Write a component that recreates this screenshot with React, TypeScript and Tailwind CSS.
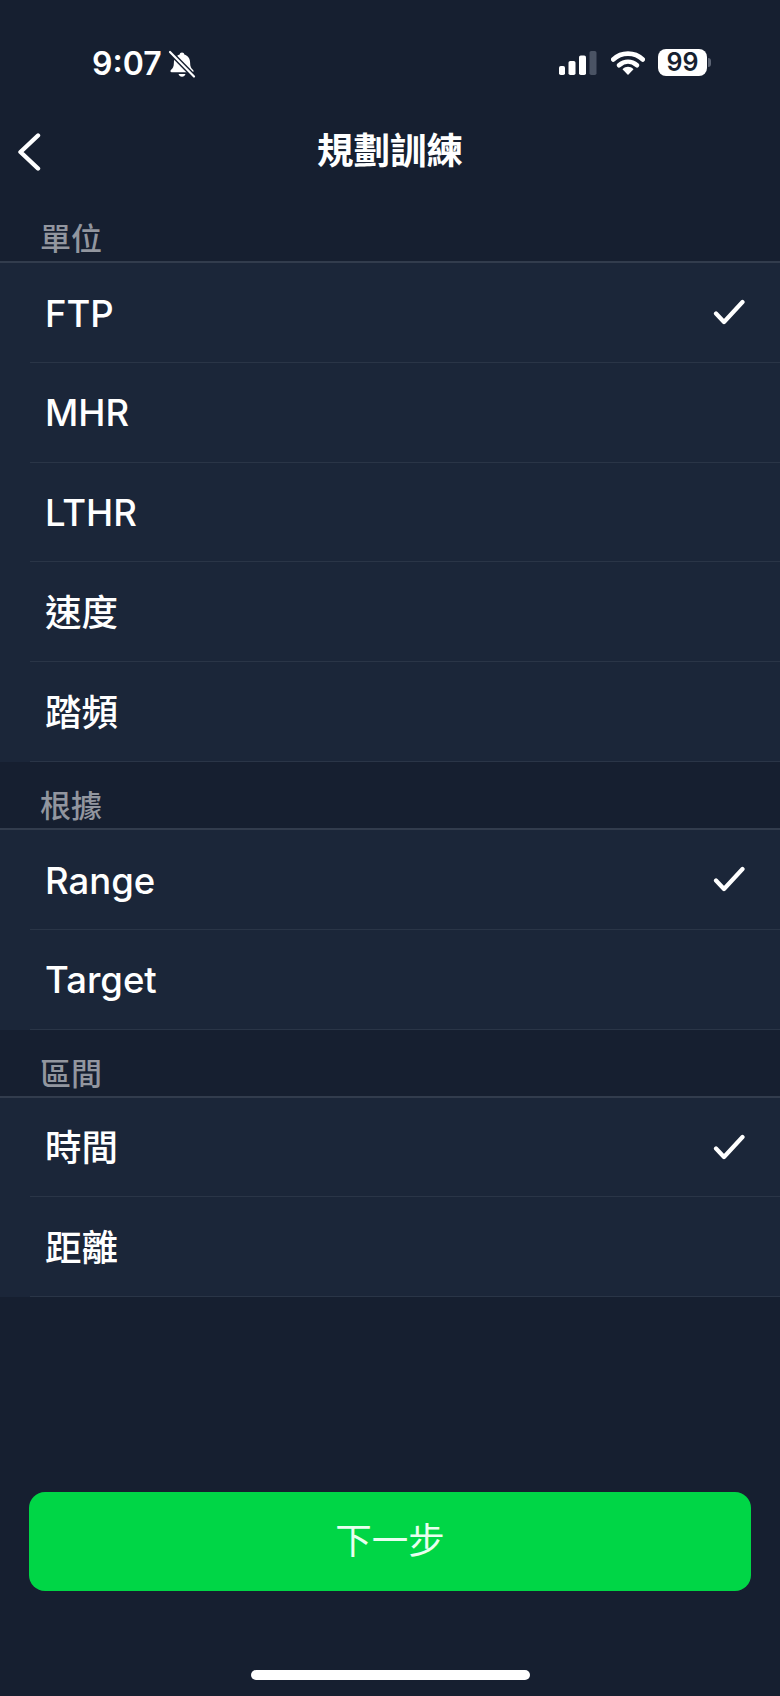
import React from "react";

const font = { fontFamily: 'Inter, "Noto Sans CJK TC", sans-serif' };

function Check() {
  return (
    <svg width="32" height="26" viewBox="0 0 32 26" fill="none" className="shrink-0">
      <path d="M3 14.5 L11 23 L29.5 3" stroke="#ffffff" strokeWidth="4.2" strokeLinecap="round" strokeLinejoin="round" />
    </svg>
  );
}

function Row({ label, checked }: { label: string; checked?: boolean }) {
  return (
    <div className="h-[99.8px] pl-[30px] bg-[#1b2639]">
      <div className="h-full flex items-center justify-between pr-[35px] pl-[15px] border-b border-[#2a3547]">
        <span className="text-[36.5px] leading-none font-medium text-white mt-[3px]">{label}</span>
        {checked && <Check />}
      </div>
    </div>
  );
}

function SectionHeader({ label }: { label: string }) {
  return (
    <div className="h-[68px] bg-[#161f30] flex items-end pl-[40px] pb-[2px] border-b-2 border-[#323c4d]">
      <span className="text-[31px] leading-[40px] font-medium text-[#92969f]">{label}</span>
    </div>
  );
}

function Section({ label, rows }: { label: string; rows: { label: string; checked?: boolean }[] }) {
  return (
    <section>
      <SectionHeader label={label} />
      {rows.map((r) => (
        <Row key={r.label} {...r} />
      ))}
    </section>
  );
}

function StatusBar() {
  return (
    <div className="h-[85px] pt-[48px] flex items-start justify-between pl-[92px] pr-[69px]">
      <div className="flex items-center gap-[6px] h-[32px]">
        <span className="text-[32px] leading-none font-semibold text-white">9:07</span>
        <svg width="28" height="29" viewBox="0 0 28 28" fill="none">
          <path d="M14 2c-1.4 0-2.2 .9-2.3 2C8 5 5.9 8.2 5.9 12c0 4-1.1 6-3 7.6-.9.8-.4 2.2 .8 2.2h20.6c1.2 0 1.7-1.4 .8-2.2-1.9-1.6-3-3.6-3-7.6 0-3.8-2.1-7-5.8-8-.1-1.1-.9-2-2.3-2z" fill="#ffffff" />
          <path d="M10.5 23.5c.4 1.6 1.8 2.7 3.5 2.7s3.1-1.1 3.5-2.7z" fill="#ffffff" />
          <path d="M2 1.5 L26 26" stroke="#161f30" strokeWidth="5" />
          <path d="M2 1.5 L26 26" stroke="#ffffff" strokeWidth="2.2" strokeLinecap="round" />
        </svg>
      </div>
      <div className="flex items-center mt-[1px] h-[27px]">
        <svg width="39" height="24" viewBox="0 0 39 24" className="mr-[14px]">
          <rect x="1" y="15" width="6" height="9" rx="1.8" fill="#ffffff" />
          <rect x="10.5" y="10" width="7" height="14" rx="1.8" fill="#ffffff" />
          <rect x="21" y="4.5" width="7" height="19.5" rx="1.8" fill="#ffffff" />
          <rect x="31.5" y="0" width="7" height="24" rx="1.8" fill="#4a5364" />
        </svg>
        <svg width="34" height="24" viewBox="0 0 34 24" fill="none" className="mr-[13px]">
          <path d="M2.2 8.5C10.5 0.7 23.5 0.7 31.8 8.5" stroke="#ffffff" strokeWidth="4.6" strokeLinecap="round" />
          <path d="M8 14.3C13.5 9.5 20.5 9.5 26 14.3" stroke="#ffffff" strokeWidth="4.6" strokeLinecap="round" />
          <path d="M11.5 18.2 C15 15 19 15 22.5 18.2 L17 24 Z" fill="#ffffff" />
        </svg>
        <div className="w-[49px] h-[27px] rounded-[8px] bg-white flex items-center justify-center">
          <span className="text-[25px] leading-none font-semibold text-[#161f30]">99</span>
        </div>
        <div className="w-[3px] h-[9px] ml-[1px] rounded-r-[3px] bg-[#5d6575]" />
      </div>
    </div>
  );
}

function NavBar() {
  return (
    <div className="h-[110px] relative flex items-center justify-center">
      <button className="absolute left-[17px] top-[48px] w-[24px] h-[38px]">
        <svg width="24" height="38" viewBox="0 0 24 38" fill="none">
          <path d="M21 2.5 L3.5 19 L21 35.5" stroke="#ffffff" strokeWidth="4.4" strokeLinecap="round" strokeLinejoin="round" />
        </svg>
      </button>
      <h1 className="text-[36.5px] leading-none font-semibold text-white pt-[22px]">規劃訓練</h1>
    </div>
  );
}

export default function App() {
  return (
    <div style={font} className="w-[780px] h-[1696px] bg-[#161f30] flex flex-col overflow-hidden">
      <StatusBar />
      <NavBar />
      <Section
        label="單位"
        rows={[{ label: "FTP", checked: true }, { label: "MHR" }, { label: "LTHR" }, { label: "速度" }, { label: "踏頻" }]}
      />
      <Section label="根據" rows={[{ label: "Range", checked: true }, { label: "Target" }]} />
      <Section label="區間" rows={[{ label: "時間", checked: true }, { label: "距離" }]} />
      <div className="flex-1" />
      <div className="px-[29px]">
        <button className="w-full h-[99px] rounded-[16px] bg-[#00d646] flex items-center justify-center">
          <span className="text-[36.5px] leading-none font-normal text-[#e9fff0]">下一步</span>
        </button>
      </div>
      <div className="h-[105px] flex justify-center pt-[79px]">
        <div className="w-[279px] h-[10px] rounded-full bg-white" />
      </div>
    </div>
  );
}
